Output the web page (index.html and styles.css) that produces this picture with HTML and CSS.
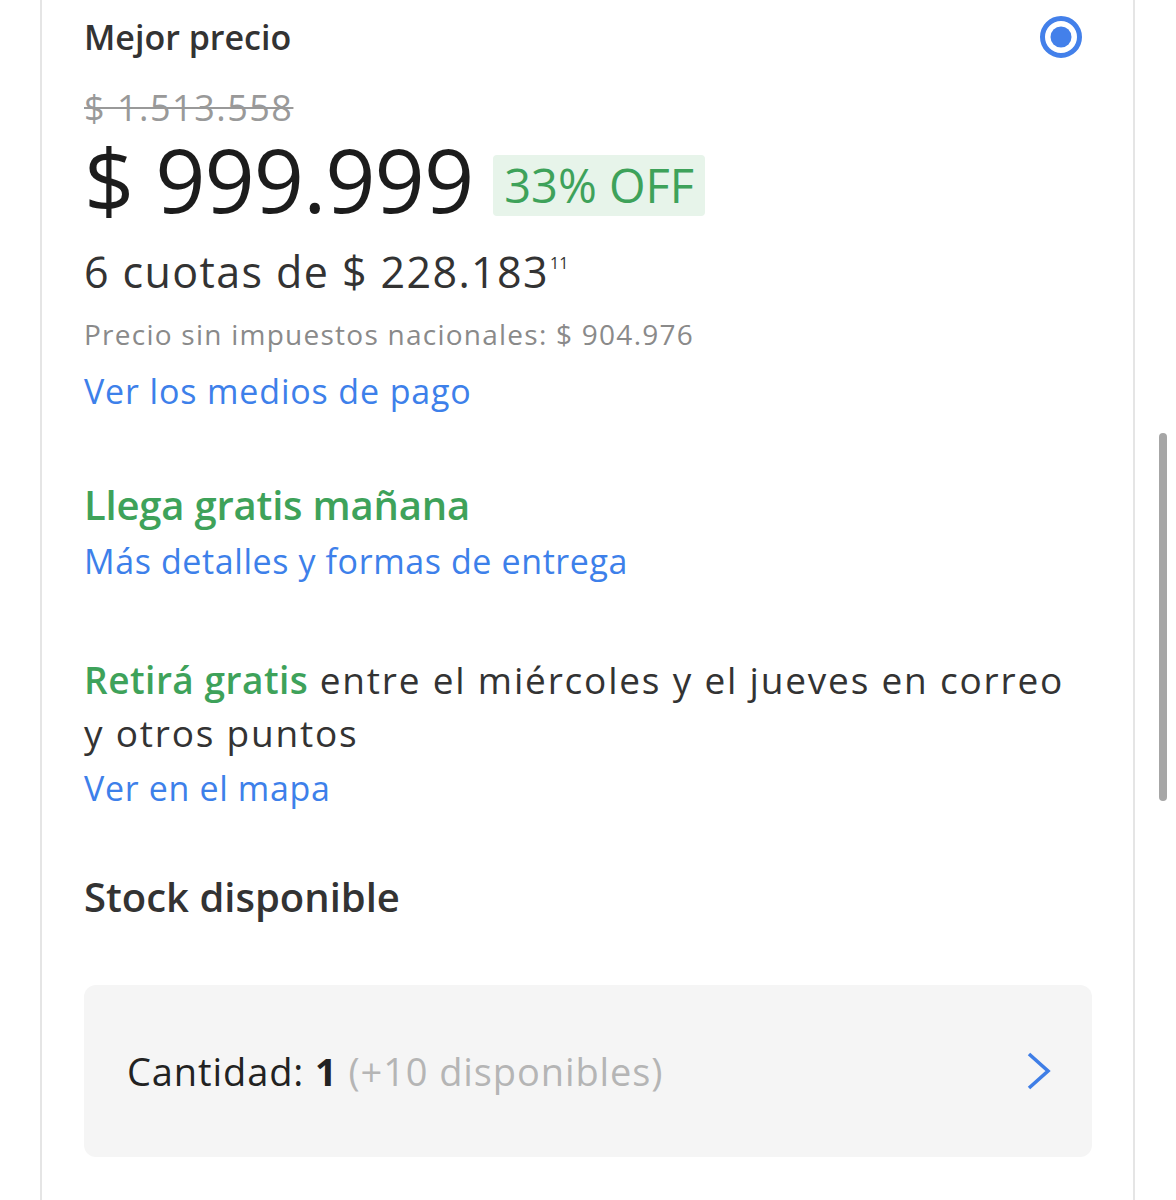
FILE: index.html
```html
<!DOCTYPE html>
<html lang="es">
<head>
<meta charset="utf-8">
<title>Mejor precio</title>
<link rel="stylesheet" href="styles.css">
</head>
<body>
<div class="page">
  <div class="card">
    <div class="head">
      <div class="title">Mejor precio</div>
      <svg class="radio" width="44" height="44" viewBox="0 0 44 44"><circle cx="22" cy="22" r="18.5" fill="none" stroke="#4380ea" stroke-width="5"/><circle cx="22" cy="22" r="10.5" fill="#4380ea"/></svg>
    </div>
    <div class="old">$ 1.513.558</div>
    <div class="price-row">
      <div class="price">$ 999.999</div>
      <div class="badge">33% OFF</div>
    </div>
    <div class="cuotas">6 cuotas de $ 228.183<sup class="cents">11</sup></div>
    <div class="nota">Precio sin impuestos nacionales: $ 904.976</div>
    <a class="link l1">Ver los medios de pago</a>
    <div class="green-title">Llega gratis mañana</div>
    <a class="link l2">Más detalles y formas de entrega</a>
    <div class="retira"><span class="green">Retirá gratis</span> entre el miércoles y el jueves en correo<br>y otros puntos</div>
    <a class="link l3">Ver en el mapa</a>
    <div class="stock">Stock disponible</div>
    <div class="qty">
      <div class="qty-text">Cantidad: <b>1</b> <span class="avail">(+10 disponibles)</span></div>
      <svg class="chev" width="26" height="38" viewBox="0 0 26 38"><path d="M3 2 L22 19 L3 36" fill="none" stroke="#3f7ee6" stroke-width="3.6" stroke-linecap="butt" stroke-linejoin="miter"/></svg>
    </div>
  </div>
  <div class="scrollbar"></div>
</div>
</body>
</html>
```
FILE: styles.css
```css
html, body {
  margin: 0;
  padding: 0;
  background: #ffffff;
}
body {
  font-family: "Open Sans", Lato, sans-serif;
  color: #333333;
}
.page {
  position: relative;
  width: 1176px;
  height: 1200px;
  overflow: hidden;
}
.card {
  margin-left: 40px;
  width: 1095px;
  height: 1200px;
  box-sizing: border-box;
  border-left: 2px solid #e5e5e5;
  border-right: 2px solid #e5e5e5;
  padding: 17px 41px 0 42px;
  display: flex;
  flex-direction: column;
}
.head {
  display: flex;
  justify-content: space-between;
  align-items: flex-start;
}
.title {
  font-size: 34px;
  line-height: 40px;
  font-weight: 600;
  color: #333;
}
.radio {
  margin-top: -2px;
  margin-right: 9px;
}
.old {
  margin-top: 27px;
  font-size: 36px;
  line-height: 44px;
  letter-spacing: 1.5px;
  color: #999;
  text-decoration: line-through;
  text-decoration-thickness: 2px;
}
.price-row {
  display: flex;
  align-items: flex-start;
  margin-top: 1px;
}
.price {
  font-size: 88px;
  line-height: 96px;
  letter-spacing: -1px;
  color: #1c1c1c;
}
.badge {
  margin-top: 24px;
  margin-left: 20px;
  height: 61px;
  padding: 0 11px 0 11px;
  background: #e7f4ea;
  border-radius: 4px;
  color: #3ea25a;
  font-size: 47px;
  line-height: 61px;
  font-weight: 500;
}
.cuotas {
  margin-top: 20px;
  font-size: 43px;
  line-height: 50px;
  letter-spacing: 1.4px;
  color: #333;
}
.cents {
  font-size: 16px;
  vertical-align: top;
  position: relative;
  top: 8px;
  line-height: 16px;
  letter-spacing: 0;
  margin-left: 1px;
}
.nota {
  margin-top: 19px;
  font-size: 28px;
  line-height: 36px;
  letter-spacing: 1.25px;
  color: #8a8a8a;
}
.link {
  display: block;
  font-size: 34px;
  line-height: 42px;
  color: #3d80ea;
}
.l1 { margin-top: 18px; letter-spacing: 0.85px; }
.green-title {
  margin-top: 71px;
  font-size: 40px;
  line-height: 44px;
  letter-spacing: -0.2px;
  font-weight: 600;
  color: #3ea25a;
}
.l2 { margin-top: 13px; letter-spacing: 0.6px; }
.retira {
  margin-top: 71px;
  font-size: 37px;
  line-height: 53px;
  letter-spacing: 1.8px;
  color: #333;
}
.green {
  color: #3ea25a;
  font-weight: 600;
  letter-spacing: 0.5px;
}
.l3 { margin-top: 8px; letter-spacing: 0.65px; }
.stock {
  margin-top: 66px;
  font-size: 40px;
  line-height: 44px;
  font-weight: 600;
  color: #333;
}
.qty {
  margin-top: 66px;
  height: 172px;
  background: #f5f5f5;
  border-radius: 12px;
  display: flex;
  align-items: center;
  justify-content: space-between;
  padding: 0 40px 0 43px;
}
.qty-text {
  font-size: 38px;
  line-height: 172px;
  letter-spacing: 0.9px;
  color: #222;
}
.qty-text b {
  font-weight: 700;
}
.avail {
  color: #b5b5b5;
}
.chev {
  display: block;
}
.scrollbar {
  position: absolute;
  left: 1159px;
  top: 433px;
  width: 8px;
  height: 368px;
  border-radius: 4px;
  background: #a6a6a6;
}
```
